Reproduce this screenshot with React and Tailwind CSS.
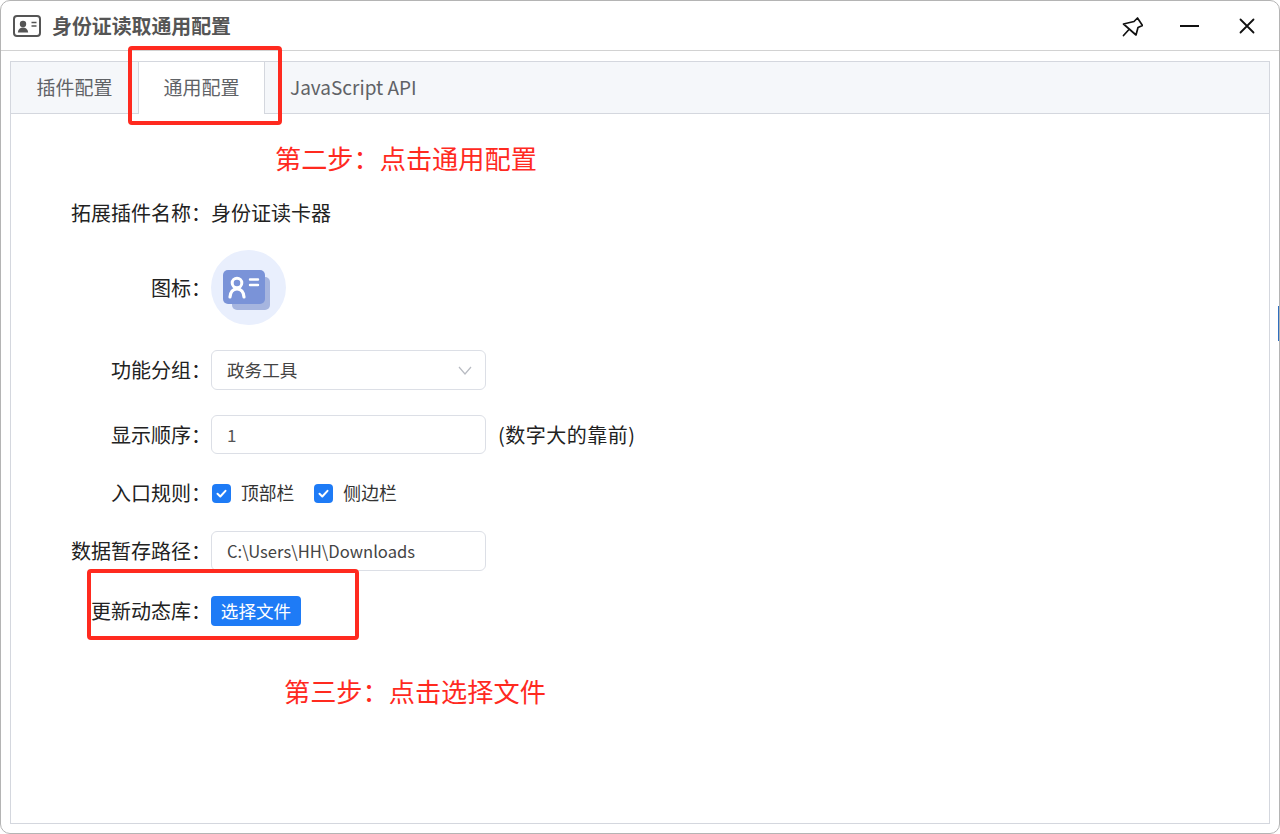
import React from "react";

const FONT = "font-['Noto_Sans_CJK_SC','Noto_Sans',sans-serif]";
const COLON = "\uFF1A";

function Label({ children }) {
  return <div className="w-[200px] shrink-0 text-right text-[20px] leading-none text-[#222]">{children}{COLON}</div>;
}

function Row({ className, children, label }) {
  return (
    <div className={`flex items-center ${className}`}>
      <Label>{label}</Label>
      <div className="flex items-center">{children}</div>
    </div>
  );
}

function Check({ label, className }) {
  return (
    <div className={`flex items-center ${className || ""}`}>
      <span className="flex h-[19px] w-[19px] items-center justify-center rounded-[4px] bg-[#1e7bf6]">
        <svg width="13" height="13" viewBox="0 0 13 13" fill="none" stroke="#fff" strokeWidth="2" strokeLinecap="round" strokeLinejoin="round">
          <path d="M2.5 6.8 5.3 9.5 10.5 3.8" />
        </svg>
      </span>
      <span className="ml-[10px] text-[17.8px] leading-none text-[#333]">{label}</span>
    </div>
  );
}

export default function App() {
  return (
    <div className={`relative h-[834px] w-[1280px] overflow-hidden rounded-[10px] border border-[#b4b4b4] bg-white ${FONT}`}>
      {/* title bar */}
      <div className="flex h-[50px] items-center border-b border-[#d2d2d2] pl-[12px]">
        <svg width="28" height="22" viewBox="0 0 28 22" fill="none">
          <rect x="1" y="1" width="26" height="20" rx="3" stroke="#555" strokeWidth="2" />
          <circle cx="10" cy="9" r="3.2" fill="#555" />
          <path d="M4.8 17.5c.4-3.4 2.5-5 5.2-5s4.8 1.6 5.2 5" fill="#555" />
          <path d="M18.5 7.5h5M18.5 11h5" stroke="#555" strokeWidth="1.6" />
        </svg>
        <div className="ml-[11px] text-[19.9px] font-bold leading-none text-[#555]">身份证读取通用配置</div>
        <div className="ml-auto flex items-center pr-[24px]">
          <svg width="22" height="22" viewBox="0 0 22 22" fill="none" stroke="#111" strokeWidth="1.7" strokeLinejoin="round" strokeLinecap="round">
            <path d="M2.5 9 13 6.5 16.5 3 21.5 10.5 17 12.5 15 20Z" />
            <path d="M7.5 15 2.5 20.5" />
          </svg>
          <div className="ml-[37px] h-[2px] w-[19px] bg-[#111]" />
          <svg className="ml-[40px]" width="16" height="16" viewBox="0 0 16 16" stroke="#111" strokeWidth="1.8" strokeLinecap="round">
            <path d="M1.5 1.5 14.5 14.5M14.5 1.5 1.5 14.5" />
          </svg>
        </div>
      </div>

      {/* tabs panel */}
      <div className="mx-[9px] mt-[10px] flex h-[763px] w-[1260px] flex-col border border-[#d4d7de] bg-white">
        <div className="flex h-[52px] shrink-0 items-stretch border-b border-[#d4d7de] bg-[#f5f7fa] text-[19px] text-[#606266]">
          <div className="flex w-[127px] items-center justify-center pb-[1px]">插件配置</div>
          <div className="-mb-px flex w-[127px] items-center justify-center border-x border-[#d4d7de] bg-white pb-[1px]">通用配置</div>
          <div className="ml-[25px] flex items-center pb-[1px]">JavaScript API</div>
        </div>

        <div className="flex flex-col text-[#222]">
          <Row label="拓展插件名称" className="mt-[79px] h-[40px]">
            <span className="text-[20px] leading-none">身份证读卡器</span>
          </Row>

          <Row label="图标" className="mt-[17px]">
            <div className="flex h-[75px] w-[75px] items-center justify-center rounded-full bg-[#e9effd]">
              <svg className="mr-[4px] mt-[5px]" width="47" height="40" viewBox="0 0 47 40" fill="none">
                <rect x="9" y="7" width="38" height="33" rx="5" fill="#a6b5df" />
                <rect x="0" y="0" width="42" height="34" rx="5" fill="#7a93d8" />
                <circle cx="14" cy="13" r="4.8" stroke="#fff" strokeWidth="3" />
                <path d="M7 27c.3-5 3-8.200 7-8.200s6.700 3.200 7 8.200" stroke="#fff" strokeWidth="3.200" strokeLinecap="round" />
                <path d="M27 9.500h8M27 15h8" stroke="#fff" strokeWidth="2.400" strokeLinecap="round" />
              </svg>
            </div>
          </Row>

          <Row label="功能分组" className="mt-[25px]">
            <div className="flex h-[40px] w-[275px] items-center justify-between rounded-[6px] border border-[#dcdfe6] pl-[15px] pr-[13px] text-[17.6px] text-[#444]">
              <span>政务工具</span>
              <svg width="14" height="9" viewBox="0 0 14 9" fill="none" stroke="#b8bbc2" strokeWidth="1.2">
                <path d="M1 1 7 8 13 1" />
              </svg>
            </div>
          </Row>

          <Row label="显示顺序" className="mt-[25px]">
            <div className="flex h-[39px] w-[275px] items-center rounded-[6px] border border-[#dcdfe6] pl-[15px] text-[17px] text-[#555]">1</div>
            <span className="ml-[12px] text-[20px] leading-none tracking-[0.5px] text-[#222]">(数字大的靠前)</span>
          </Row>

          <Row label="入口规则" className="mt-[29px] h-[20px]">
            <Check label="顶部栏" className="ml-[1px]" />
            <Check label="侧边栏" className="ml-[20px]" />
          </Row>

          <Row label="数据暂存路径" className="mt-[28px]">
            <div className="flex h-[40px] w-[275px] items-center rounded-[6px] border border-[#dcdfe6] pl-[15px] text-[16.6px] text-[#444]">C:\Users\HH\Downloads</div>
          </Row>

          <Row label="更新动态库" className="mt-[25px]">
            <div className="flex h-[30px] w-[90px] items-center justify-center rounded-[4px] bg-[#1e7bf6] text-[17.6px] leading-none text-white">选择文件</div>
          </Row>
        </div>
      </div>

      {/* annotations laid over the screenshot */}
      <div className="absolute left-[127px] top-[45px] h-[79px] w-[154px] rounded-[4px] border-4 border-[#ff2a1f]" />
      <div className="absolute left-[86px] top-[568px] h-[71px] w-[272px] rounded-[4px] border-4 border-[#ff2a1f]" />
      <div className="absolute left-[274px] top-[138px] text-[26.2px] leading-[38px] text-[#ff2a1f]">第二步{COLON}点击通用配置</div>
      <div className="absolute left-[283px] top-[671px] text-[26.2px] leading-[38px] text-[#ff2a1f]">第三步{COLON}点击选择文件</div>
      <div className="absolute right-0 top-[305px] h-[35px] w-px bg-[#2f6fc0]" />
    </div>
  );
}
